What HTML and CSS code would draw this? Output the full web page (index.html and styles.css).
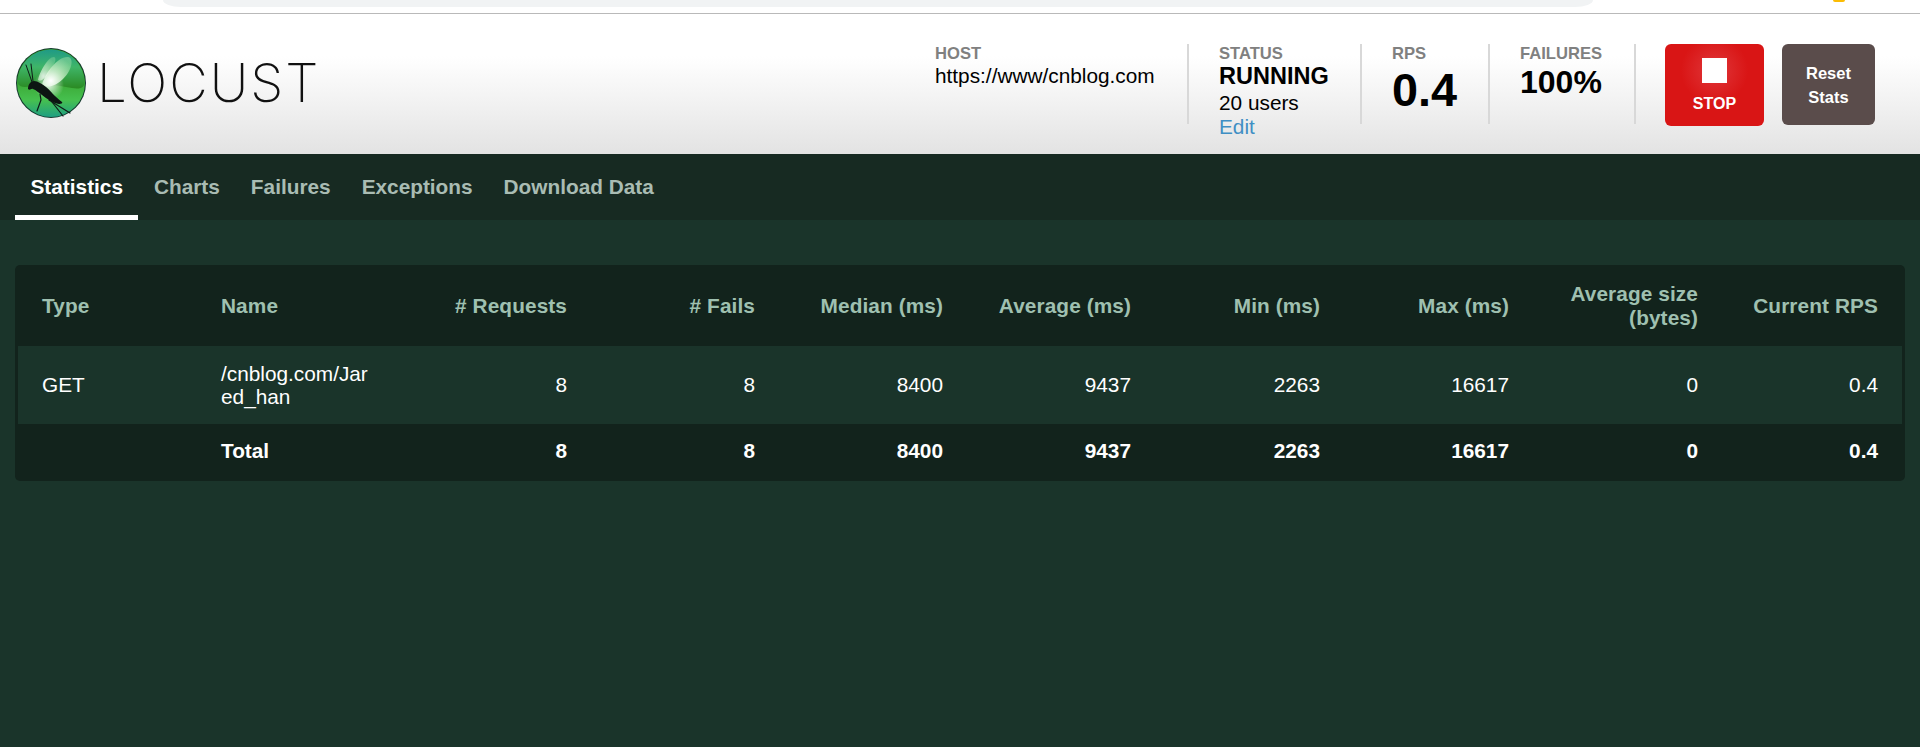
FILE: index.html
```html
<!DOCTYPE html>
<html lang="en">
  <head>
    <meta charset="UTF-8" />
    <meta name="viewport" content="width=device-width, initial-scale=1.0" />
    <title>Locust</title>
    <link rel="stylesheet" href="styles.css">
  </head>
  <body>
    <div class="browser-strip">
      <div class="address-bar"></div>
      <div class="ext-dot"></div>
    </div>

    <header class="top-bar">
      <a class="brand" href="#">
        <svg class="brand-icon" width="70" height="70" viewBox="0 0 70 70">
          <defs>
            <linearGradient id="cap" x1="0" y1="0" x2="0" y2="1">
              <stop offset="0%" stop-color="#1f9a86" />
              <stop offset="45%" stop-color="#3fb568" />
              <stop offset="100%" stop-color="#2a8a22" />
            </linearGradient>
            <linearGradient id="low" x1="0" y1="0" x2="0" y2="1">
              <stop offset="40%" stop-color="#37a02c" />
              <stop offset="75%" stop-color="#46c04f" />
              <stop offset="100%" stop-color="#1f9f82" />
            </linearGradient>
            <radialGradient id="glow" cx="30%" cy="80%" r="85%">
              <stop offset="0%" stop-color="#ffffff" />
              <stop offset="50%" stop-color="#d0f0cd" stop-opacity="0.8" />
              <stop offset="100%" stop-color="#9bdda8" stop-opacity="0.5" />
            </radialGradient>
            <radialGradient id="halo" cx="50%" cy="50%" r="50%">
              <stop offset="0%" stop-color="#ffffff" stop-opacity="0.85" />
              <stop offset="100%" stop-color="#ffffff" stop-opacity="0" />
            </radialGradient>
          </defs>
          <circle cx="35" cy="35" r="35" fill="#12382c" />
          <circle cx="35" cy="35" r="34" fill="url(#low)" />
          <path d="M1.5 35A33.5 33.5 0 0 1 68.5 35C68 42 60 41 50 39C40 37 30 35 20 37C12 39 5 41 1.5 35Z" fill="url(#cap)" />
          <circle cx="33" cy="37" r="15" fill="url(#halo)" />
          <path d="M26 37C29 25 42 8 52 9C59 10 55 24 47 31C41 37 32 41 26 37Z" fill="url(#glow)" />
          <path d="M22 32C24 23 32 9 38 9C42 10 37 20 32 26C28 31 25 34 22 32Z" fill="url(#glow)" opacity="0.75" />
          <g fill="none" stroke="#0d1a17" stroke-linecap="round">
            <path d="M16 34L10 17" stroke-width="1" />
            <path d="M17 33L15 16" stroke-width="1" />
            <path d="M24 46L25 52L21 63" stroke-width="1.2" />
            <path d="M33 52L54 65" stroke-width="1.2" />
            <path d="M36 54L47 68" stroke-width="1.2" />
          </g>
          <path d="M12 41C12 36 15 33 18 33C22 33 26 36 30 39C34 42 38 48 46 54C47 55 45 56 43 56C37 55 31 51 26 47C23 45 20 42 17 41C15 40 14 43 12 41Z" fill="#0d1512" />
        </svg>
        <span class="brand-name">LOCUST</span>
      </a>

      <div class="stats">
        <div class="stat stat-host">
          <div class="stat-label">HOST</div>
          <div class="stat-text">https://www/cnblog.com</div>
        </div>
        <div class="stat stat-status">
          <div class="stat-label">STATUS</div>
          <div class="status-value">RUNNING</div>
          <div class="stat-text">20 users</div>
          <a class="edit-link" href="#">Edit</a>
        </div>
        <div class="stat stat-rps">
          <div class="stat-label">RPS</div>
          <div class="rps-value">0.4</div>
        </div>
        <div class="stat stat-fail">
          <div class="stat-label">FAILURES</div>
          <div class="fail-value">100%</div>
        </div>
      </div>

      <div class="actions">
        <button class="stop-btn" type="button">
          <span class="stop-square"></span>
          STOP
        </button>
        <button class="reset-btn" type="button">Reset<br />Stats</button>
      </div>
    </header>

    <nav class="tabs">
      <a class="tab active" href="#">Statistics</a>
      <a class="tab" href="#">Charts</a>
      <a class="tab" href="#">Failures</a>
      <a class="tab" href="#">Exceptions</a>
      <a class="tab" href="#">Download Data</a>
    </nav>

    <main class="content">
      <div class="table-card">
        <table class="stats-table">
          <colgroup>
            <col class="col-type" />
            <col class="col-name" />
            <col class="col-requests" />
            <col class="col-num" />
            <col class="col-num" />
            <col class="col-num" />
            <col class="col-wide" />
            <col class="col-wide" />
            <col class="col-wide" />
            <col class="col-rps" />
          </colgroup>
          <thead>
            <tr>
              <th>Type</th>
              <th>Name</th>
              <th class="num"># Requests</th>
              <th class="num"># Fails</th>
              <th class="num">Median (ms)</th>
              <th class="num">Average (ms)</th>
              <th class="num">Min (ms)</th>
              <th class="num">Max (ms)</th>
              <th class="num">Average size (bytes)</th>
              <th class="num">Current RPS</th>
            </tr>
          </thead>
          <tbody>
            <tr>
              <td>GET</td>
              <td class="name-cell">/cnblog.com/Jared_han</td>
              <td class="num">8</td>
              <td class="num">8</td>
              <td class="num">8400</td>
              <td class="num">9437</td>
              <td class="num">2263</td>
              <td class="num">16617</td>
              <td class="num">0</td>
              <td class="num">0.4</td>
            </tr>
          </tbody>
          <tfoot>
            <tr>
              <td></td>
              <td>Total</td>
              <td class="num">8</td>
              <td class="num">8</td>
              <td class="num">8400</td>
              <td class="num">9437</td>
              <td class="num">2263</td>
              <td class="num">16617</td>
              <td class="num">0</td>
              <td class="num">0.4</td>
            </tr>
          </tfoot>
        </table>
      </div>
    </main>
  </body>
</html>
```

FILE: styles.css
```css
html,
body {
  margin: 0;
  padding: 0;
}

body {
  font-family: 'Liberation Sans', Arial, sans-serif;
  background: #1a342a;
  min-height: 100vh;
  overflow: hidden;
}

/* Strip of the browser window above the page */
.browser-strip {
  height: 13px;
  background: white;
  border-bottom: 1px solid #b9b9b9;
  display: flex;
  align-items: flex-start;
}

.address-bar {
  width: 1430px;
  height: 7px;
  margin-left: 163px;
  background: #f1f3f4;
  border-radius: 0 0 18px 18px / 0 0 7px 7px;
}

.ext-dot {
  width: 12px;
  height: 2px;
  margin-left: 240px;
  background: #fbbc04;
  border-radius: 0 0 6px 6px;
}

.top-bar {
  height: 140px;
  box-sizing: border-box;
  background: linear-gradient(#ffffff 30%, #e3e3e3 100%);
  display: flex;
  align-items: flex-start;
  padding: 30px 45px 0 16px;
}

.brand {
  display: flex;
  align-items: center;
  gap: 11px;
  margin-top: 3px;
  text-decoration: none;
  color: #111;
}

.brand-name {
  font-family: Inter, 'Liberation Sans', sans-serif;
  font-weight: 200;
  font-size: 53px;
  line-height: 70px;
  letter-spacing: 2px;
  padding-top: 1px;
}

.stats {
  display: flex;
  margin-left: auto;
}

.stat {
  height: 80px;
  box-sizing: border-box;
  margin-right: 30px;
  border-right: 2px solid #d8d8d8;
  color: black;
}

.stat-host {
  width: 254px;
}

.stat-status {
  width: 143px;
}

.stat-rps {
  width: 98px;
}

.stat-fail {
  width: 116px;
  margin-right: 29px;
}

.stat-label {
  font-size: 16.6px;
  font-weight: bold;
  color: #808080;
  line-height: 19px;
}

.stat-text {
  font-size: 20.8px;
  line-height: 25px;
}

.status-value {
  font-size: 23.5px;
  font-weight: bold;
  line-height: 27px;
}

.edit-link {
  display: block;
  font-size: 20.8px;
  line-height: 24px;
  color: #3f8fc4;
  text-decoration: none;
}

.rps-value {
  font-size: 46.8px;
  font-weight: bold;
  line-height: 54px;
}

.fail-value {
  font-size: 32px;
  font-weight: bold;
  line-height: 39px;
}

.actions {
  display: flex;
  align-items: flex-start;
  gap: 18px;
}

.stop-btn,
.reset-btn {
  border: none;
  color: white;
  font-family: inherit;
  font-weight: bold;
  border-radius: 6px;
  cursor: pointer;
  padding: 0;
}

.stop-btn {
  width: 99px;
  height: 82px;
  font-size: 16px;
  background: radial-gradient(circle at 50% 32%, #e0373a 0%, #d91515 45%, #d91515 100%);
  display: flex;
  flex-direction: column;
  align-items: center;
  padding-top: 14px;
  gap: 12px;
  box-sizing: border-box;
}

.stop-square {
  width: 25px;
  height: 25px;
  background: white;
}

.reset-btn {
  width: 93px;
  height: 81px;
  font-size: 16.5px;
  line-height: 24px;
  background: #5a4c4b;
}

/* Tabs */
.tabs {
  height: 66px;
  box-sizing: border-box;
  background: #172a22;
  display: flex;
  padding-left: 15px;
}

.tab {
  padding: 0 15.5px;
  font-size: 20.8px;
  font-weight: bold;
  line-height: 65px;
  color: #a9bcb3;
  text-decoration: none;
}

.tab.active {
  color: white;
  border-bottom: 5px solid white;
  height: 61px;
}

/* Statistics table */
.content {
  padding: 45px 15px 0 15px;
}

.table-card {
  background: #12231c;
  border-radius: 5px;
  padding: 0 3px;
}

.stats-table {
  width: 100%;
  table-layout: fixed;
  border-collapse: collapse;
  font-size: 20.8px;
  line-height: 23.3px;
  color: white;
}

.col-type {
  width: 179px;
}

.col-name,
.col-requests {
  width: 197px;
}

.col-num {
  width: 188px;
}

.col-wide {
  width: 189px;
}

.stats-table th,
.stats-table td {
  padding: 0 24px;
  text-align: left;
  overflow-wrap: anywhere;
}

.stats-table th {
  height: 81px;
  color: #9fc0b0;
  font-weight: bold;
  letter-spacing: 0.1px;
}

.stats-table tbody tr {
  height: 78px;
  background: #1a342a;
}

.stats-table tfoot tr {
  height: 57px;
}

.stats-table tfoot td {
  font-weight: bold;
  padding-bottom: 3px;
}

.stats-table .num {
  text-align: right;
}

.name-cell {
  word-break: break-all;
}
```
